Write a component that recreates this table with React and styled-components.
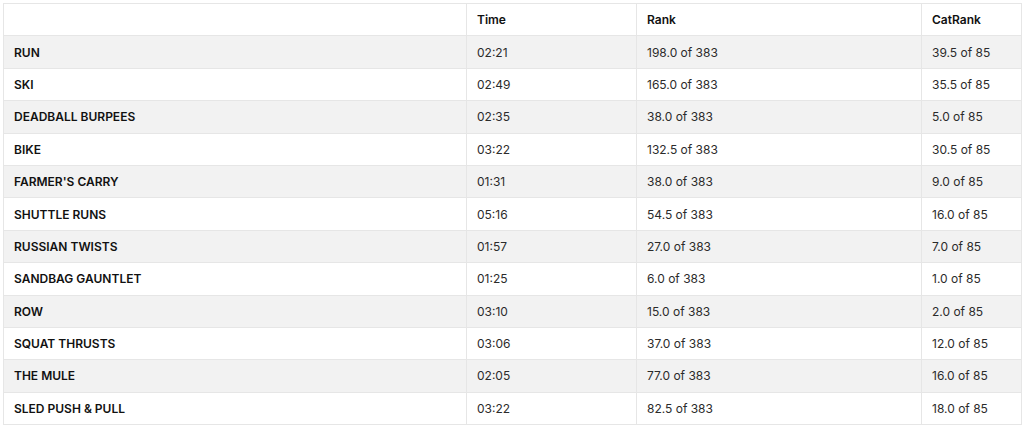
import styled, { createGlobalStyle } from "styled-components"

const splits = [
    { name: "RUN", time: "02:21", rank: "198.0 of 383", catRank: "39.5 of 85" },
    { name: "SKI", time: "02:49", rank: "165.0 of 383", catRank: "35.5 of 85" },
    { name: "DEADBALL BURPEES", time: "02:35", rank: "38.0 of 383", catRank: "5.0 of 85" },
    { name: "BIKE", time: "03:22", rank: "132.5 of 383", catRank: "30.5 of 85" },
    { name: "FARMER'S CARRY", time: "01:31", rank: "38.0 of 383", catRank: "9.0 of 85" },
    { name: "SHUTTLE RUNS", time: "05:16", rank: "54.5 of 383", catRank: "16.0 of 85" },
    { name: "RUSSIAN TWISTS", time: "01:57", rank: "27.0 of 383", catRank: "7.0 of 85" },
    { name: "SANDBAG GAUNTLET", time: "01:25", rank: "6.0 of 383", catRank: "1.0 of 85" },
    { name: "ROW", time: "03:10", rank: "15.0 of 383", catRank: "2.0 of 85" },
    { name: "SQUAT THRUSTS", time: "03:06", rank: "37.0 of 383", catRank: "12.0 of 85" },
    { name: "THE MULE", time: "02:05", rank: "77.0 of 383", catRank: "16.0 of 85" },
    { name: "SLED PUSH & PULL", time: "03:22", rank: "82.5 of 383", catRank: "18.0 of 85" },
]

export default function App() {
    return (
        <>
            <GlobalStyle />
            <Page>
                <Table>
                    <colgroup>
                        <col style={{ width: 463 }} />
                        <col style={{ width: 170 }} />
                        <col style={{ width: 285 }} />
                        <col />
                    </colgroup>
                    <thead>
                        <tr>
                            <Head></Head>
                            <Head>Time</Head>
                            <Head>Rank</Head>
                            <Head>CatRank</Head>
                        </tr>
                    </thead>
                    <tbody>
                        {splits.map((s, index) => (
                            <Row key={s.name} $striped={index % 2 === 0}>
                                <Cell $label>{s.name}</Cell>
                                <Cell>{s.time}</Cell>
                                <Cell>{s.rank}</Cell>
                                <Cell>{s.catRank}</Cell>
                            </Row>
                        ))}
                    </tbody>
                </Table>
            </Page>
        </>
    )
}

const GlobalStyle = createGlobalStyle`
    body {
        margin: 0;
        background: #ffffff;
        font-family: Inter, "Noto Sans", "Liberation Sans", sans-serif;
    }
`

const Page = styled.div`
    padding: 3px 2px 0 3px;
`

const Table = styled.table`
    width: 1019px;
    border-collapse: collapse;
    table-layout: fixed;
    font-size: 12px;
    color: #2b2b2b;
`

const Head = styled.th`
    height: 31.4px;
    padding: 0 10px;
    border: 1px solid #e6e6e6;
    text-align: left;
    font-weight: 600;
    color: #111111;
`

const Row = styled.tr`
    background: ${(p) => (p.$striped ? "#f2f2f2" : "#ffffff")};
`

const Cell = styled.td`
    height: 31.4px;
    padding: 0 10px;
    border: 1px solid #e6e6e6;
    font-weight: ${(p) => (p.$label ? 600 : 400)};
    color: ${(p) => (p.$label ? "#111111" : "#2b2b2b")};
    white-space: nowrap;
`
